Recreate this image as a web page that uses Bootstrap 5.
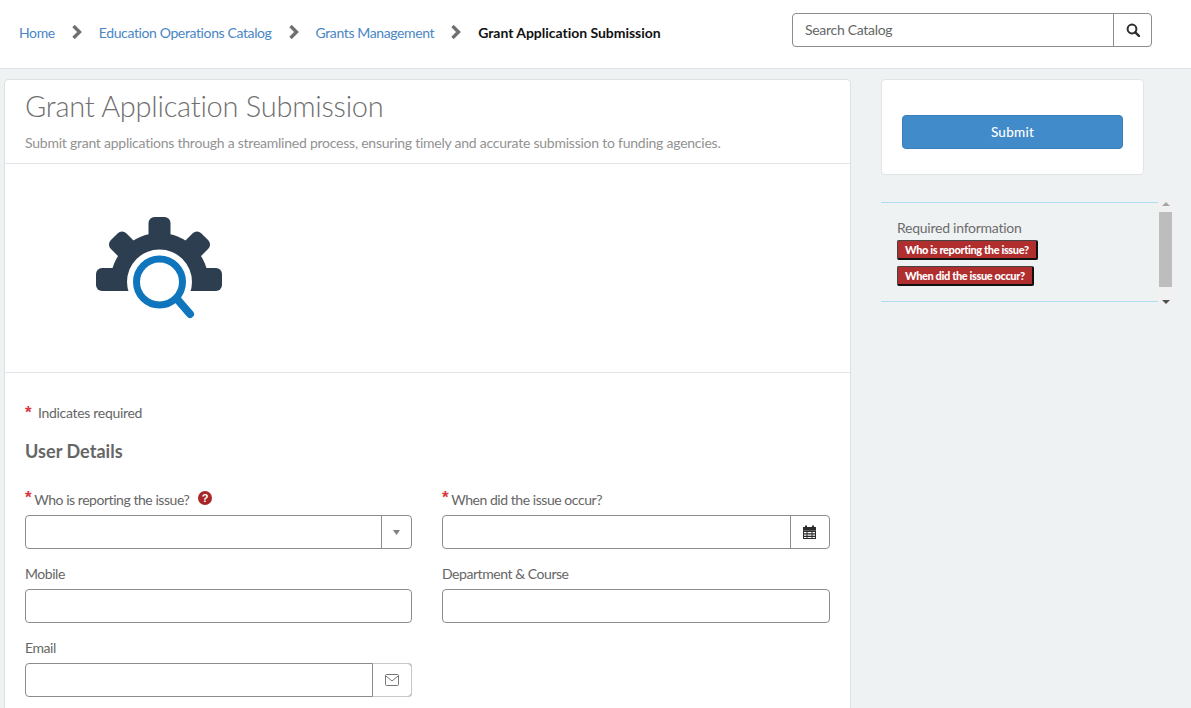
<!DOCTYPE html>
<html lang="en">
<head>
<meta charset="utf-8">
<title>Grant Application Submission</title>
<link rel="stylesheet" href="https://cdn.jsdelivr.net/npm/bootstrap@5.3.0/dist/css/bootstrap.min.css">
<style>
html,body{height:708px;overflow:hidden}
body{font-family:"Lato","Liberation Sans",sans-serif;font-size:14px;color:#666;background:#eff2f3;letter-spacing:-.3px}
.topbar{height:69px;background:#fff;border-bottom:1px solid #dde3e6;padding:0 39px 0 19px}
.crumbs{margin-top:-4px;letter-spacing:-.38px}
.crumbs a{color:#4a86c5;text-decoration:none}
.crumbs b{color:#111;font-weight:700;letter-spacing:-.03px}
.crumb-sep{width:10px;height:14px;margin:0 17px;display:block}
.search-box{width:360px;height:34px;margin-top:-9px;border:1px solid #8c8c8c;border-radius:4px;overflow:hidden}
.search-text{padding-left:12px;color:#666}
.search-btn{width:38px;border-left:1px solid #8c8c8c}
.page-body{padding:10px 0 0 4px;gap:30px}
.main-panel{width:847px;height:640px;background:#fff;border:1px solid #dde1e4;border-radius:4px 4px 0 0}
.panel-head{height:84px;padding:8px 20px 0;border-bottom:1px solid #e3e6e8}
.panel-title{font-size:29px;font-weight:300;color:#6f6f6f;line-height:36px;margin:0;letter-spacing:-.25px}
.panel-sub{color:#929292;margin:9px 0 0;line-height:20px;letter-spacing:-.24px}
.hero{height:209px;border-bottom:1px solid #e3e6e8;padding:52px 0 0 91px}
.form-zone{padding:30px 20px 0}
.star{color:#d9363e;font-weight:700;font-family:"Liberation Sans",sans-serif;font-size:17px;line-height:14px}
.req-note{line-height:20px}
.sect-title{font-size:18px;font-weight:700;color:#666;margin:16px 0 0;line-height:24px;letter-spacing:.05px}
.form-cols{display:grid;grid-template-columns:387px 388px;column-gap:30px;margin-top:26px}
.fld{height:74px}
.fld-label{height:26px;line-height:20px;display:flex;align-items:flex-start;padding-top:1px;letter-spacing:-.45px}
.fld-label .star{margin-right:3px;line-height:16px}
.help-ic{margin:1px 0 0 9px}
.fld-box{height:34px;border:1px solid #8c8c8c;border-radius:4px;overflow:hidden}
.fld-addon{width:39px;border-left:1px solid #8c8c8c}
.fld-addon-soft{border:1px solid #c9c9c9;border-left:1px solid #8c8c8c;border-radius:0 4px 4px 0;margin:-1px -1px -1px 0}
.addon-narrow{width:30px}
.addon-wide{width:40px}
.cal-ic{margin-right:2px}
.side-col{width:277px}
.submit-card{width:263px;height:96px;background:#fff;border:1px solid #e1e5e8;border-radius:4px;padding:35px 20px 0}
.submit-btn{width:221px;height:34px;background:#428bca;border:1px solid #3a7fbb;border-radius:4px;color:#fff;padding:0;font-size:13.500px;font-weight:500;letter-spacing:.25px}
.req-wrap{margin-top:27px;width:292px}
.req-box{width:277px;height:100px;border-top:1px solid #aedcf0;border-bottom:1px solid #aedcf0;padding:16px 16px 0}
.req-title{line-height:18px;color:#6c6c6c;display:block;letter-spacing:-.25px}
.req-tag{display:table;background:#b02e2e;color:#fff;font-size:11px;font-weight:900;line-height:15px;padding:1px 7px;border-radius:2px;border-right:2px solid #111;border-bottom:2px solid #111;border-left:1px solid #444;border-top:1px solid #444;letter-spacing:-.38px;margin-top:3px}
.req-tag + .req-tag{margin-top:6px}
.fake-scroll{width:15px;height:106px;background:#f1f1f1;margin-top:-3px;padding:0 1px}
.fake-thumb{height:75px;background:#bdbdbd}
.tri-up,.tri-down{width:0;height:0;border-left:4px solid transparent;border-right:4px solid transparent;margin:0 auto}
.tri-up{border-bottom:4px solid #a5a5a5;margin-top:3px;margin-bottom:6px}
.tri-down{border-top:4px solid #505050;margin-top:13px}
</style>
</head>
<body>
<header class="topbar d-flex align-items-center justify-content-between">
  <nav class="crumbs d-flex align-items-center">
    <a href="#">Home</a>
    <svg class="crumb-sep" viewBox="0 0 10 14"><path d="M1.500 1 7.500 7 1.500 13" fill="none" stroke="#707070" stroke-width="3.400"/></svg>
    <a href="#">Education Operations Catalog</a>
    <svg class="crumb-sep" viewBox="0 0 10 14"><path d="M1.500 1 7.500 7 1.500 13" fill="none" stroke="#707070" stroke-width="3.400"/></svg>
    <a href="#">Grants Management</a>
    <svg class="crumb-sep" viewBox="0 0 10 14"><path d="M1.500 1 7.500 7 1.500 13" fill="none" stroke="#707070" stroke-width="3.400"/></svg>
    <b>Grant Application Submission</b>
  </nav>
  <div class="search-box d-flex">
    <div class="search-text flex-grow-1 d-flex align-items-center">Search Catalog</div>
    <div class="search-btn d-flex align-items-center justify-content-center">
      <svg width="14" height="14" viewBox="0 0 14 14"><circle cx="6" cy="6" r="4.400" fill="none" stroke="#2b2b2b" stroke-width="2"/><path d="M9.300 9.300 13 13" stroke="#2b2b2b" stroke-width="2.400" stroke-linecap="round"/></svg>
    </div>
  </div>
</header>
<div class="page-body d-flex align-items-start">
  <main class="main-panel">
    <div class="panel-head">
      <h1 class="panel-title">Grant Application Submission</h1>
      <p class="panel-sub">Submit grant applications through a streamlined process, ensuring timely and accurate submission to funding agencies.</p>
    </div>
    <div class="hero">
      <svg width="128" height="106" viewBox="0 0 128 106">
        <defs><clipPath id="gearclip"><rect x="0" y="0" width="128" height="75"/></clipPath></defs>
        <g fill="#2c3e50" clip-path="url(#gearclip)">
          <circle cx="63.500" cy="66" r="49"/>
          <rect x="52.500" y="1" width="22" height="30" rx="6"/>
          <rect x="0" y="52" width="30" height="23" rx="6"/>
          <rect x="96" y="52" width="30" height="23" rx="6"/>
          <rect x="52.500" y="2" width="22" height="30" rx="6" transform="rotate(-45 63.500 66)"/>
          <rect x="52.500" y="2" width="22" height="30" rx="6" transform="rotate(45 63.500 66)"/>
        </g>
        <circle cx="63.500" cy="66" r="32.500" fill="#fff"/>
        <circle cx="63.500" cy="66" r="23" fill="#fff" stroke="#0f75bc" stroke-width="7"/>
        <path d="M81 83 94 98" stroke="#0f75bc" stroke-width="8" stroke-linecap="round"/>
      </svg>
    </div>
    <div class="form-zone">
      <div class="req-note"><span class="star">*</span>&nbsp; Indicates required</div>
      <h2 class="sect-title">User Details</h2>
      <div class="form-cols">
        <div class="fld">
          <div class="fld-label"><span class="star">*</span>Who is reporting the issue?
            <svg class="help-ic" width="14" height="14" viewBox="0 0 14 14"><circle cx="7" cy="7" r="7" fill="#a82626"/><text x="7" y="11" text-anchor="middle" font-size="11" font-weight="700" fill="#fff" font-family="Liberation Sans">?</text></svg>
          </div>
          <div class="fld-box d-flex">
            <div class="flex-grow-1"></div>
            <div class="fld-addon addon-narrow d-flex align-items-center justify-content-center"><svg width="7" height="5" viewBox="0 0 7 5"><path d="M0 0h7L3.500 5z" fill="#808080"/></svg></div>
          </div>
        </div>
        <div class="fld">
          <div class="fld-label"><span class="star">*</span>When did the issue occur?</div>
          <div class="fld-box d-flex">
            <div class="flex-grow-1"></div>
            <div class="fld-addon d-flex align-items-center justify-content-center">
              <svg class="cal-ic" width="13" height="14" viewBox="0 0 13 14"><path fill="#2b2b2b" d="M0 2h2V.5h2V2h5V.5h2V2h2v3.500H0z"/><path fill="#2b2b2b" d="M0 5.500h13V14H0zM1 7v1.200h2.500V7zm3.500 0v1.200h4V7zm5 0v1.200H12V7zM1 9.500v1.200h2.500V9.500zm3.500 0v1.200h4V9.500zm5 0v1.200H12V9.500zM1 12v1h2.500v-1zm3.500 0v1h4v-1zm5 0v1H12v-1z"/></svg>
            </div>
          </div>
        </div>
        <div class="fld">
          <div class="fld-label">Mobile</div>
          <div class="fld-box"></div>
        </div>
        <div class="fld">
          <div class="fld-label">Department &amp; Course</div>
          <div class="fld-box"></div>
        </div>
        <div class="fld">
          <div class="fld-label">Email</div>
          <div class="fld-box d-flex overflow-visible">
            <div class="flex-grow-1"></div>
            <div class="fld-addon fld-addon-soft addon-wide d-flex align-items-center justify-content-center">
              <svg width="14" height="12" viewBox="0 0 14 12"><rect x=".5" y=".5" width="13" height="11" rx="1" fill="none" stroke="#777"/><path d="M1 2 7 7 13 2" fill="none" stroke="#777"/></svg>
            </div>
          </div>
        </div>
      </div>
    </div>
  </main>
  <aside class="side-col">
    <div class="submit-card"><button type="button" class="btn submit-btn">Submit</button></div>
    <div class="req-wrap d-flex">
      <div class="req-box">
        <span class="req-title">Required information</span>
        <span class="req-tag">Who is reporting the issue?</span>
        <span class="req-tag">When did the issue occur?</span>
      </div>
      <div class="fake-scroll">
        <div class="tri-up"></div>
        <div class="fake-thumb"></div>
        <div class="tri-down"></div>
      </div>
    </div>
  </aside>
</div>
<script src="https://cdn.jsdelivr.net/npm/bootstrap@5.3.0/dist/js/bootstrap.bundle.min.js"></script>
</body>
</html>
